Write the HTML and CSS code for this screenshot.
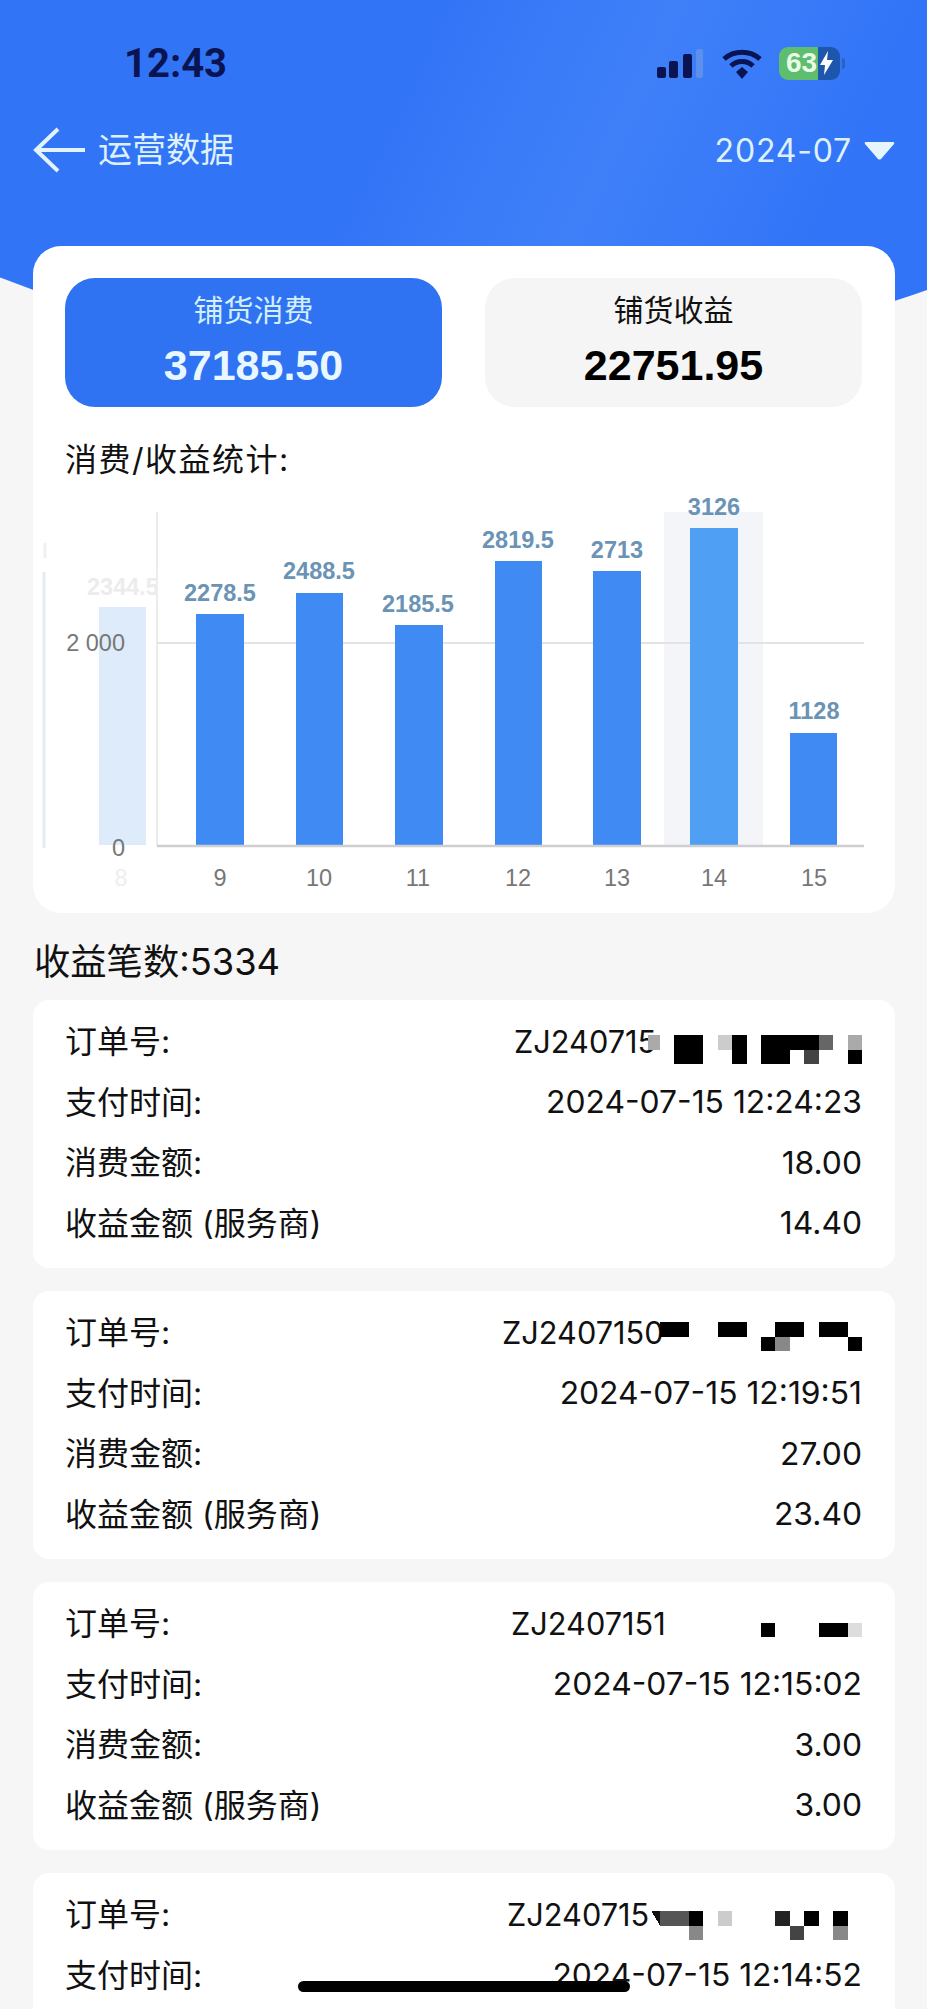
FILE: index.html
```html
<!DOCTYPE html>
<html>
<head>
  <title>运营数据</title>
  <link rel="stylesheet" href="styles.css">
</head>
<body>

<header class="top">
  <div class="status">
    <span class="time">12:43</span>
    <div class="status-icons">
      <svg class="signal" width="48" height="30" viewBox="0 0 48 30">
        <rect x="2" y="19" width="9" height="11" rx="2" fill="#0a1452"/>
        <rect x="14" y="13" width="9" height="17" rx="2" fill="#0a1452"/>
        <rect x="28" y="6" width="9" height="24" rx="2" fill="#0a1452"/>
        <rect x="41" y="1" width="7" height="29" rx="2" fill="#5c90ea"/>
      </svg>
      <svg class="wifi" width="42" height="31" viewBox="0 0 42 31">
        <path d="M3 11 C13 2 29 2 39 11" fill="none" stroke="#0a1452" stroke-width="5"/>
        <path d="M10 18 C16 12 26 12 32 18" fill="none" stroke="#0a1452" stroke-width="5"/>
        <path d="M15 24 L21 19 L27 24 L21 31 Z" fill="#0a1452"/>
      </svg>
      <div class="battery">
        <span class="battery-level">63</span>
        <svg class="bolt" width="15" height="24" viewBox="0 0 15 24">
          <path d="M9 0 L1 14 H6 L5 24 L14 9 H8 Z" fill="#fff"/>
        </svg>
      </div>
    </div>
  </div>
  <div class="nav">
    <svg class="back" width="54" height="46" viewBox="0 0 54 46">
      <path d="M52 23 H4 M25 2 L3 23 L25 44" fill="none" stroke="#e2f3fb" stroke-width="4"/>
    </svg>
    <span class="nav-title">运营数据</span>
    <span class="month">2024-07</span>
    <svg class="caret" width="31" height="19" viewBox="0 0 31 19">
      <path d="M2 1 H29 Q31 1 30 3 L17 18 Q15.500 19 14 18 L1 3 Q0 1 2 1 Z" fill="#e6f4fc"/>
    </svg>
  </div>
</header>

<main class="page">
  <section class="panel">
    <div class="totals">
      <div class="total total-active">
        <div class="total-label">铺货消费</div>
        <div class="total-value">37185.50</div>
      </div>
      <div class="total">
        <div class="total-label">铺货收益</div>
        <div class="total-value">22751.95</div>
      </div>
    </div>
    <h3 class="chart-title">消费/收益统计:</h3>
    <svg class="chart" width="862" height="423" viewBox="33 490 862 423">
      <rect x="664" y="512" width="99" height="334" fill="#f4f5f9"/>
      <line x1="157" y1="512" x2="157" y2="846" stroke="#e4e4e4" stroke-width="1.500"/>
      <line x1="157" y1="643" x2="864" y2="643" stroke="#e3e3e3" stroke-width="2"/>
      <line x1="44" y1="572" x2="44" y2="848" stroke="#e3ebf6" stroke-width="3"/>
      <line x1="45" y1="543" x2="45" y2="558" stroke="#f0f0f0" stroke-width="3"/>
      <rect x="99" y="607" width="47" height="238" fill="#deebfa"/>
      <rect x="196" y="614" width="48" height="231" fill="#3f8bf3"/>
      <rect x="296" y="593" width="47" height="252" fill="#3f8bf3"/>
      <rect x="395" y="625" width="48" height="220" fill="#3f8bf3"/>
      <rect x="495" y="561" width="47" height="284" fill="#3f8bf3"/>
      <rect x="593" y="571" width="48" height="274" fill="#3f8bf3"/>
      <rect x="690" y="528" width="48" height="317" fill="#4f9ff5"/>
      <rect x="790" y="733" width="47" height="112" fill="#3f8bf3"/>
      <line x1="157" y1="846" x2="864" y2="846" stroke="#cfcfcf" stroke-width="2.500"/>

      <text class="bar-label bar-label-faded" x="123" y="595">2344.5</text>
      <rect x="157.800" y="570" width="8" height="34" fill="#fff"/>
      <text class="bar-label" x="220" y="601">2278.5</text>
      <text class="bar-label" x="319" y="579">2488.5</text>
      <text class="bar-label" x="418" y="612">2185.5</text>
      <text class="bar-label" x="518" y="548">2819.5</text>
      <text class="bar-label" x="617" y="558">2713</text>
      <text class="bar-label" x="714" y="515">3126</text>
      <text class="bar-label" x="814" y="719">1128</text>

      <text class="axis-label axis-y" x="125" y="651">2 000</text>
      <text class="axis-label axis-y" x="125" y="856">0</text>
      <text class="axis-label axis-faded" x="121" y="886">8</text>
      <text class="axis-label" x="220" y="886">9</text>
      <text class="axis-label" x="319" y="886">10</text>
      <text class="axis-label" x="418" y="886">11</text>
      <text class="axis-label" x="518" y="886">12</text>
      <text class="axis-label" x="617" y="886">13</text>
      <text class="axis-label" x="714" y="886">14</text>
      <text class="axis-label" x="814" y="886">15</text>
    </svg>
  </section>

  <h2 class="count">收益笔数:5334</h2>

  <div class="orders">
    <div class="order order-a">
      <div class="row">
        <span>订单号:</span>
        <div class="order-no">
          <span class="order-text">ZJ240715</span>
          <svg class="mosaic" width="202" height="58" viewBox="0 0 14 4" shape-rendering="crispEdges">
            <g transform="translate(0 1.6)">
              <rect x="-0.800" y="0" width="0.800" height="1" fill="#aaa"/>
              <rect x="1" y="0" width="2" height="2" fill="#000"/>
              <rect x="4" y="0" width="1" height="1" fill="#ccc"/>
              <rect x="5" y="0" width="1" height="2" fill="#000"/>
              <rect x="7" y="0" width="2" height="2" fill="#000"/>
              <rect x="9" y="0" width="2" height="1" fill="#000"/>
              <rect x="11" y="0" width="1" height="1" fill="#666"/>
              <rect x="10" y="1" width="1" height="1" fill="#444"/>
              <rect x="13" y="0" width="1" height="1" fill="#aaa"/>
              <rect x="13" y="1" width="1" height="1" fill="#000"/>
            </g>
          </svg>
        </div>
      </div>
      <div class="row"><span>支付时间:</span><span>2024-07-15 12:24:23</span></div>
      <div class="row"><span>消费金额:</span><span>18.00</span></div>
      <div class="row"><span>收益金额 (服务商)</span><span>14.40</span></div>
    </div>

    <div class="order order-b">
      <div class="row">
        <span>订单号:</span>
        <div class="order-no">
          <span class="order-text">ZJ2407150</span>
          <svg class="mosaic" width="202" height="58" viewBox="0 0 14 4" shape-rendering="crispEdges">
            <g transform="translate(0 1.320)">
              <rect x="0" y="0" width="2" height="1" fill="#000"/>
              <rect x="4" y="0" width="2" height="1" fill="#000"/>
              <rect x="8" y="0" width="2" height="1" fill="#000"/>
              <rect x="11" y="0" width="2" height="1" fill="#000"/>
              <rect x="7" y="1" width="1" height="1" fill="#000"/>
              <rect x="8" y="1" width="1" height="1" fill="#888"/>
              <rect x="13" y="1" width="1" height="1" fill="#000"/>
            </g>
          </svg>
        </div>
      </div>
      <div class="row"><span>支付时间:</span><span>2024-07-15 12:19:51</span></div>
      <div class="row"><span>消费金额:</span><span>27.00</span></div>
      <div class="row"><span>收益金额 (服务商)</span><span>23.40</span></div>
    </div>

    <div class="order order-c">
      <div class="row">
        <span>订单号:</span>
        <div class="order-no">
          <span class="order-text">ZJ2407151</span>
          <svg class="mosaic" width="202" height="58" viewBox="0 0 14 4" shape-rendering="crispEdges">
            <g transform="translate(0 2)">
              <rect x="7" y="0" width="1" height="1" fill="#000"/>
              <rect x="11" y="0" width="2" height="1" fill="#000"/>
              <rect x="13" y="0" width="1" height="1" fill="#ddd"/>
            </g>
          </svg>
        </div>
      </div>
      <div class="row"><span>支付时间:</span><span>2024-07-15 12:15:02</span></div>
      <div class="row"><span>消费金额:</span><span>3.00</span></div>
      <div class="row"><span>收益金额 (服务商)</span><span>3.00</span></div>
    </div>

    <div class="order order-d">
      <div class="row">
        <span>订单号:</span>
        <div class="order-no">
          <span class="order-text">ZJ240715</span>
          <svg class="mosaic" width="202" height="58" viewBox="0 0 14 4" shape-rendering="crispEdges">
            <g transform="translate(0 1.800)">
              <path d="M-0.600 0 H0 V1 Z" fill="#111"/>
              <rect x="0" y="0" width="2" height="1" fill="#555"/>
              <rect x="2" y="0" width="1" height="1" fill="#000"/>
              <rect x="2" y="1" width="1" height="1" fill="#888"/>
              <rect x="4" y="0" width="1" height="1" fill="#ccc"/>
              <rect x="8" y="0" width="1" height="1" fill="#222"/>
              <rect x="10" y="0" width="1" height="1" fill="#000"/>
              <rect x="9" y="1" width="1" height="1" fill="#444"/>
              <rect x="12" y="0" width="1" height="1" fill="#000"/>
              <rect x="12" y="1" width="1" height="1" fill="#888"/>
            </g>
          </svg>
        </div>
      </div>
      <div class="row"><span>支付时间:</span><span>2024-07-15 12:14:52</span></div>
    </div>
  </div>
</main>

<div class="home-bar"></div>

</body>
</html>
```

FILE: styles.css
```css
html, body {
  height: 2009px;
  overflow: hidden;
}
body {
  margin: 0;
  position: relative;
  background-color: #f6f6f6;
  color: #111;
  font-family: Inter, "Noto Sans CJK SC", sans-serif;
}
.top {
  box-sizing: border-box;
  height: 365px;
  padding-top: 38px;
  background: linear-gradient(115deg, #3274f6 40%, #3f80f9 62%, #3174f7 85%);
  clip-path: ellipse(750px 361px at 480px 0);
}
.status {
  display: flex;
  align-items: center;
  height: 50px;
  padding: 0 87px 0 124px;
}
.time {
  font-family: Roboto, sans-serif;
  font-size: 40px;
  font-weight: 700;
  color: #0a1452;
}
.status-icons {
  display: flex;
  align-items: center;
  margin-left: auto;
}
.signal {
  margin-right: 18px;
}
.wifi {
  margin-right: 16px;
}
.battery {
  position: relative;
  display: flex;
  align-items: center;
  box-sizing: border-box;
  width: 61px;
  height: 33px;
  padding-left: 7px;
  border-radius: 9px;
  background: linear-gradient(90deg, #5ebd6f 39px, #1f56ad 39px);
}
.battery::after {
  content: "";
  position: absolute;
  left: 63px;
  top: 11px;
  width: 3px;
  height: 11px;
  border-radius: 0 3px 3px 0;
  background-color: #2a62c0;
}
.battery-level {
  font-family: "Liberation Sans", sans-serif;
  font-size: 28px;
  font-weight: 700;
  color: #e9fbe6;
}
.bolt {
  margin-left: 2px;
}
.nav {
  display: flex;
  align-items: center;
  height: 50px;
  margin-top: 37px;
  padding: 0 32px 0 33px;
  color: #dcf1fb;
}
.nav-title {
  margin: 0 0 6px 11px;
  font-size: 34px;
}
.month {
  margin-left: auto;
  font-size: 32px;
  letter-spacing: 0.8px;
}
.caret {
  margin-left: 12px;
}
.page {
  position: relative;
  z-index: 1;
  height: 1763px;
  margin-top: -119px;
  padding: 0 32px 0 33px;
  overflow: hidden;
}
.panel {
  height: 667px;
  background-color: #fff;
  border-radius: 28px;
  overflow: hidden;
}
.totals {
  display: flex;
  gap: 43px;
  padding: 32px 33px 0 32px;
}
.total {
  flex: 1;
  height: 129px;
  padding-top: 11px;
  box-sizing: border-box;
  border-radius: 30px;
  background-color: #f5f5f5;
  text-align: center;
}
.total-active {
  background-color: #2f73f2;
  color: #d3effc;
}
.total-label {
  font-size: 30px;
  line-height: 42px;
}
.total-value {
  margin-top: 9px;
  font-family: "Liberation Sans", sans-serif;
  font-size: 43px;
  font-weight: 700;
  line-height: 50px;
  color: #000;
}
.total-active .total-value {
  color: #e9f8ff;
}
.chart-title {
  margin: 33px 0 10px 32px;
  font-size: 32px;
  font-weight: 400;
  line-height: 40px;
  letter-spacing: 1.500px;
}
.chart {
  display: block;
}
.bar-label {
  font-family: "Liberation Sans", sans-serif;
  font-size: 23.500px;
  font-weight: 700;
  fill: #6a93b5;
  text-anchor: middle;
}
.bar-label-faded {
  fill: #ececec;
}
.axis-label {
  font-family: "Liberation Sans", sans-serif;
  font-size: 23.500px;
  fill: #777;
  text-anchor: middle;
}
.axis-y {
  text-anchor: end;
}
.axis-faded {
  fill: #eee;
}
.count {
  margin: 29px 0 18px 1px;
  font-size: 36.300px;
  font-weight: 400;
  line-height: 40px;
}
.orders {
  display: flex;
  flex-direction: column;
  gap: 23px;
}
.order {
  height: 268px;
  box-sizing: border-box;
  padding: 11px 33px 15px 32px;
  background-color: #fff;
  border-radius: 16px;
}
.row {
  display: flex;
  justify-content: space-between;
  align-items: center;
  height: 60.500px;
  font-size: 32px;
}
.row > span:first-child {
  margin-bottom: 4px;
}
.row > span:last-child {
  font-size: 31.800px;
}
.order-no {
  display: flex;
  align-items: center;
}
.order-text {
  width: 146px;
  font-size: 30.700px;
  white-space: nowrap;
}
.order-b .order-text {
  width: 158px;
}
.order-c .order-text {
  width: 149px;
}
.order-d .order-text {
  width: 153px;
}
.mosaic {
  overflow: visible;
}
.home-bar {
  position: absolute;
  z-index: 2;
  left: 298px;
  top: 1981px;
  width: 332px;
  height: 11px;
  border-radius: 6px;
  background-color: #000;
}
```
